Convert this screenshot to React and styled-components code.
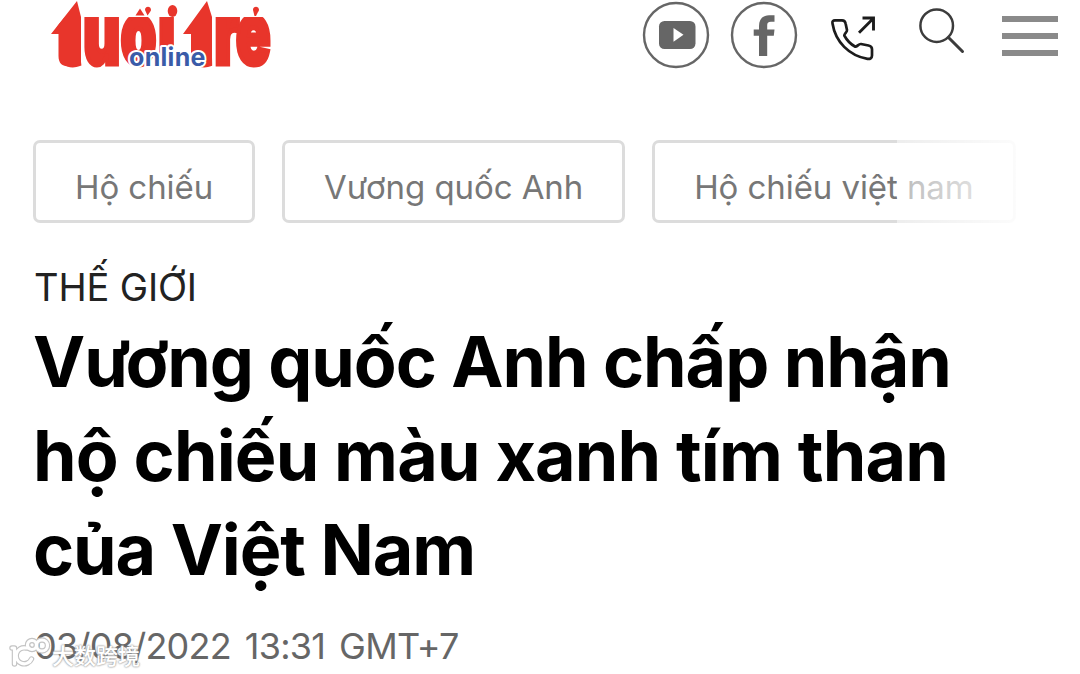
import React from 'react';
import styled, { createGlobalStyle } from 'styled-components';

const TAGS = ['Hộ chiếu', 'Vương quốc Anh', 'Hộ chiếu việt nam'];

function Logo() {
  return (
    <LogoSvg viewBox="0 0 240 74" role="img" aria-label="tuổi trẻ online">
      <defs>
        <clipPath id="logo-body">
          <path d="M11 74 V34 L25 17 H139 V34 H143 L157 17 H240 V74 Z" />
        </clipPath>
      </defs>
      <g fill="#e8352b">
        <g clipPath="url(#logo-body)">
          <text
            className="name"
            transform="translate(0 64) scale(0.66 1)"
            x="27 65.500 122.500 179 205 226 264.500 297"
          >
            tuổi trẻ
          </text>
        </g>
        {/* arrow heads on both t letters, then the accents */}
        <path d="M37 1 L11 34 H18.500 V56 C18.500 63 22 66.500 29 66.500 L41 64 V17 Z" />
        <path d="M167 1 L143 34 H151 V56 C151 63 155 66.500 161 66.500 L172 64 V17 Z" />
        <path d="M41.500 17 V55 M172.700 17 V66" stroke="#fff" strokeWidth="1" />
        <path d="M95.500 15.500 L100 8.500 L104.500 15.500 Z" />
        <path d="M105 10 a3 3 0 1 1 5 2 l-2.500 3.500 z" />
        <ellipse cx="132.500" cy="11" rx="4.800" ry="6" />
        <path d="M213 10 a3 3 0 1 1 5 2 l-2 4 h-1.500 z" />
      </g>
      <text className="online" x="89" y="65.500">online</text>
    </LogoSvg>
  );
}

function YoutubeIcon() {
  return (
    <Icon $size={68} $left={0} $top={1} viewBox="0 0 68 68" fill="none">
      <circle cx="34" cy="34" r="32" stroke="#666" strokeWidth="2.4" />
      <rect x="17" y="20" width="36.5" height="28" rx="5.5" fill="#666" />
      <path d="M31.500 27 L41.500 33.800 L31.500 40.800 Z" fill="#fff" />
    </Icon>
  );
}

function FacebookIcon() {
  return (
    <Icon $size={68} $left={20} $top={1} viewBox="0 0 68 68" fill="none">
      <circle cx="34" cy="34" r="32" stroke="#666" strokeWidth="2.4" />
      <path
        d="M29 55 V34.700 H23.700 V28.500 H29 V25 C29 18 33 14.200 39 14.200 H44.500 V20.800 H41 C38 20.800 37.200 22 37.200 24.500 V28.500 H44.500 L43.800 34.700 H37.200 V55 Z"
        fill="#666"
      />
    </Icon>
  );
}

function CallIcon() {
  return (
    <Icon
      $size={48}
      $left={32}
      $top={14}
      viewBox="0 0 48 48"
      fill="none"
      stroke="#1c1c1c"
      strokeWidth="2.700"
      strokeLinejoin="round"
    >
      <path d="M2.500 9.500 C2 7.500 3.200 6.300 5 6.300 H12 C14 6.300 15.200 7.300 15.600 9.500 L17 16 C17.300 18 14.300 19.500 14.300 21.500 C17 26.500 20.500 30.200 25.300 32.700 C27.500 32.700 28.500 29.700 31 30 L38.500 31.500 C41 32 42 33 42 35.200 V41.500 C42 44.200 40 45.200 37.500 44.900 C19 41.500 5.500 28 2.500 9.500 Z" />
      <path d="M29 18.800 L43 4.700 M32.500 4 H43.500 V16.500" strokeWidth="2.900" strokeLinejoin="miter" />
    </Icon>
  );
}

function SearchIcon() {
  return (
    <Icon $size={48} $left={39} $top={6} viewBox="0 0 48 48" fill="none" stroke="#3c3c3c">
      <circle cx="19.700" cy="19.700" r="16.300" strokeWidth="2.500" />
      <path d="M31.500 31.500 L45.500 45.500" strokeWidth="3" strokeLinecap="round" />
    </Icon>
  );
}

function Watermark() {
  return (
    <WatermarkBox>
      <svg width="44" height="34" viewBox="0 0 44 34" fill="none">
        <g stroke="#c4c4c4" strokeWidth="5.500" strokeLinecap="round" strokeLinejoin="round">
          <path d="M4 11 H6.500 V27" />
          <path d="M21 11 H18 A8 8 0 1 0 23.500 22" />
          <circle cx="24" cy="8" r="4.500" />
          <circle cx="34" cy="8.500" r="5.500" />
        </g>
        <g stroke="#fff" strokeWidth="3.200" strokeLinecap="round" strokeLinejoin="round">
          <path d="M4 11 H6.500 V27" />
          <path d="M21 11 H18 A8 8 0 1 0 23.500 22" />
          <circle cx="24" cy="8" r="4.500" />
          <circle cx="34" cy="8.500" r="5.500" />
        </g>
      </svg>
      <span>大数跨境</span>
    </WatermarkBox>
  );
}

function App() {
  return (
    <Page>
      <GlobalStyle />
      <Header>
        <Logo />
        <Actions>
          <YoutubeIcon />
          <FacebookIcon />
          <CallIcon />
          <SearchIcon />
          <MenuButton aria-label="Menu">
            <i />
            <i />
            <i />
          </MenuButton>
        </Actions>
      </Header>
      <TagList>
        {TAGS.map((tag) => (
          <Tag key={tag} href="#">{tag}</Tag>
        ))}
        <TagFade />
      </TagList>
      <Article>
        <Category href="#">THẾ GIỚI</Category>
        <Title>
          <TitleLine $tracking={-1.08}>Vương quốc Anh chấp nhận </TitleLine>
          <TitleLine $tracking={-0.84}>hộ chiếu màu xanh tím than </TitleLine>
          <TitleLine $tracking={-1.08}>của Việt Nam</TitleLine>
        </Title>
        <PublishedAt>03/08/2022 13:31 GMT+7</PublishedAt>
      </Article>
      <Watermark />
    </Page>
  );
}

const GlobalStyle = createGlobalStyle`
  * {
    box-sizing: border-box;
  }

  body {
    margin: 0;
    background: #fff;
    font-family: Inter, 'Liberation Sans', sans-serif;
  }

  a {
    text-decoration: none;
  }
`;

const Page = styled.div`
  position: relative;
  width: 1080px;
  height: 674px;
  overflow: hidden;
`;

const Header = styled.header`
  display: flex;
  justify-content: space-between;
  height: 140px;
  padding: 0 22px 0 40px;
`;

const LogoSvg = styled.svg`
  width: 240px;
  height: 74px;

  .name {
    font-size: 86px;
    font-weight: 900;
    stroke: #e8352b;
    stroke-width: 5px;
  }

  .online {
    font-size: 25px;
    font-weight: 700;
    letter-spacing: 0.3px;
    fill: #3a5ba8;
    stroke: #fff;
    stroke-width: 4px;
    stroke-linejoin: round;
    paint-order: stroke;
  }
`;

const Actions = styled.div`
  display: flex;
  align-items: flex-start;
`;

const Icon = styled.svg`
  flex: none;
  width: ${({ $size }) => $size}px;
  height: ${({ $size }) => $size}px;
  margin-left: ${({ $left }) => $left}px;
  margin-top: ${({ $top }) => $top}px;
`;

const MenuButton = styled.button`
  display: flex;
  flex-direction: column;
  gap: 11px;
  width: 56px;
  margin: 16px 0 0 37px;
  padding: 0;
  border: 0;
  background: none;

  i {
    width: 100%;
    height: 6px;
    background: #8a8a8a;
  }
`;

const TagList = styled.nav`
  position: relative;
  display: flex;
  gap: 27px;
  height: 84px;
  padding-left: 33px;
`;

const Tag = styled.a`
  flex: none;
  height: 83px;
  padding: 0 39px;
  border: 3px solid #dcdcdc;
  border-radius: 7px;
  color: #777;
  font-size: 33px;
  letter-spacing: -0.08px;
  line-height: 89px;
  white-space: nowrap;
`;

/* fades the last tag out towards the right edge */
const TagFade = styled.div`
  position: absolute;
  top: 0;
  left: 897px;
  width: 124px;
  height: 84px;
  background: linear-gradient(to right, rgba(255, 255, 255, 0.5), rgba(255, 255, 255, 0.92));
`;

const Article = styled.article`
  display: flex;
  flex-direction: column;
  align-items: flex-start;
  padding: 39px 34px 0;
`;

const Category = styled.a`
  color: #222;
  font-size: 38px;
  letter-spacing: -0.15px;
  line-height: 48px;
`;

const Title = styled.h1`
  width: 960px;
  margin: 4px 0 0 -1px;
  font-size: 70px;
  font-weight: 700;
  line-height: 94px;
`;

const TitleLine = styled.span`
  display: block;
  letter-spacing: ${({ $tracking }) => $tracking}px;
  white-space: nowrap;
`;

const PublishedAt = styled.time`
  margin-top: 25px;
  color: #666;
  font-size: 36px;
  letter-spacing: -0.75px;
  line-height: 48px;
  word-spacing: 4.5px;
`;

const WatermarkBox = styled.div`
  position: absolute;
  left: 8px;
  top: 637px;
  display: flex;
  align-items: center;

  span {
    color: #fff;
    font-family: 'Noto Sans CJK SC', sans-serif;
    font-size: 22px;
    font-weight: 500;
    line-height: 34px;
    text-shadow: 0 0 2px #999, 0 0 2px #999;
  }
`;

export default App;
